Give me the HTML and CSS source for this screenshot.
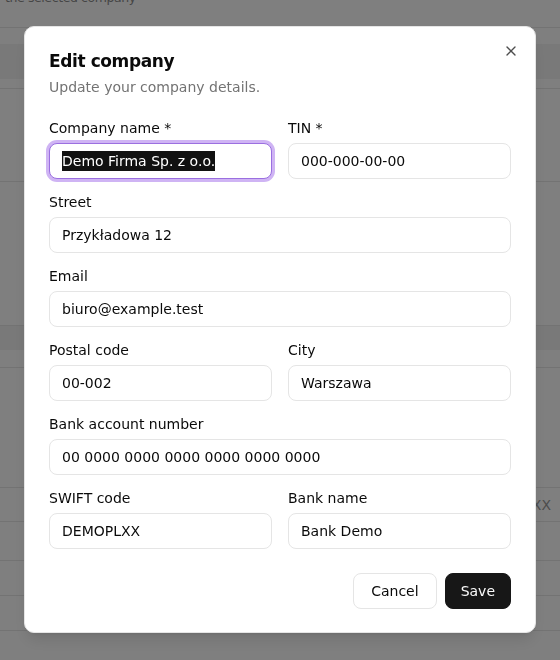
FILE: index.html
```html
<!DOCTYPE html>
<html lang="en">
<head>
<meta charset="utf-8">
<title>Edit company</title>
<link rel="stylesheet" href="styles.css">
</head>
<body>
<main class="page">
  <div class="bg-head"><p class="bg-desc">the selected company</p></div>
  <div class="bg-gap"></div>
  <div class="bg-band"></div>
  <div class="bg-row h10"></div>
  <div class="bg-row h93"></div>
  <div class="bg-row h144"></div>
  <div class="bg-band h24"></div>
  <div class="bg-row h18"></div>
  <div class="bg-row h120"></div>
  <div class="bg-row h34 bg-cell">DEMOPLXX</div>
  <div class="bg-row h39"></div>
  <div class="bg-row h35"></div>
  <div class="bg-row h35"></div>
</main>

<div class="overlay"></div>

<div class="dialog" role="dialog" aria-labelledby="dlg-title">
  <button type="button" class="close" aria-label="Close">
    <svg viewBox="0 0 24 24" width="16" height="16" fill="none" stroke="currentColor" stroke-width="2" stroke-linecap="round" stroke-linejoin="round"><path d="M18 6 6 18"/><path d="m6 6 12 12"/></svg>
  </button>
  <header class="dialog-header">
    <h2 class="dialog-title" id="dlg-title">Edit company</h2>
    <p class="dialog-desc">Update your company details.</p>
  </header>
  <form class="form">
    <div class="row two">
      <div class="field">
        <label class="label">Company name *</label>
        <div class="input focused"><span class="selected">Demo Firma Sp. z o.o.</span></div>
      </div>
      <div class="field">
        <label class="label" for="tin">TIN *</label>
        <input class="input" id="tin" value="000-000-00-00">
      </div>
    </div>
    <div class="field">
      <label class="label" for="street">Street</label>
      <input class="input" id="street" value="Przykładowa 12">
    </div>
    <div class="field">
      <label class="label" for="email">Email</label>
      <input class="input" id="email" value="biuro@example.test">
    </div>
    <div class="row two">
      <div class="field">
        <label class="label" for="postal">Postal code</label>
        <input class="input" id="postal" value="00-002">
      </div>
      <div class="field">
        <label class="label" for="city">City</label>
        <input class="input" id="city" value="Warszawa">
      </div>
    </div>
    <div class="field">
      <label class="label" for="bank">Bank account number</label>
      <input class="input" id="bank" value="00 0000 0000 0000 0000 0000 0000">
    </div>
    <div class="row two">
      <div class="field">
        <label class="label" for="swift">SWIFT code</label>
        <input class="input" id="swift" value="DEMOPLXX">
      </div>
      <div class="field">
        <label class="label" for="bankname">Bank name</label>
        <input class="input" id="bankname" value="Bank Demo">
      </div>
    </div>
    <div class="actions">
      <button type="button" class="btn btn-outline">Cancel</button>
      <button type="submit" class="btn btn-primary">Save</button>
    </div>
  </form>
</div>
</body>
</html>
```

FILE: styles.css
```css
* { box-sizing: border-box; }

html, body {
  margin: 0;
  padding: 0;
  background: #ffffff;
  font-family: "DejaVu Sans", "Liberation Sans", sans-serif;
  color: #0a0a0a;
}

/* background page */
.page {
  width: 560px;
  height: 660px;
  overflow: hidden;
  background: #ffffff;
}
.bg-head {
  display: flow-root;
  height: 28px;
  border-bottom: 1px solid #e6e6e6;
}
.bg-desc {
  margin: -10px 0 0 5px;
  font-size: 12.5px;
  line-height: 16px;
  letter-spacing: -0.4px;
  color: #8a8a8a;
}
.bg-gap { height: 16px; }
.bg-band {
  height: 35px;
  background: #f2f2f2;
}
.bg-band.h24 { height: 24px; }
.bg-row { border-bottom: 1px solid #e6e6e6; }
.h10 { height: 10px; }
.h93 { height: 93px; }
.h144 { height: 144px; }
.h18 { height: 18px; }
.h120 { height: 120px; }
.h34 { height: 34px; }
.h39 { height: 39px; }
.h35 { height: 35px; }
.bg-cell {
  display: flex;
  align-items: center;
  justify-content: flex-end;
  padding-right: 9px;
  font-size: 14px;
  color: #9a9a9a;
}

.overlay {
  position: fixed;
  inset: 0;
  background: rgba(0, 0, 0, 0.5);
}

/* dialog */
.dialog {
  position: fixed;
  left: 24px;
  top: 26px;
  width: 512px;
  background: #ffffff;
  border: 1px solid #e5e5e5;
  border-radius: 10px;
  padding: 24px 24px 23px;
  box-shadow: 0 10px 15px -3px rgba(0,0,0,0.1), 0 4px 6px -4px rgba(0,0,0,0.1);
}
.close {
  position: absolute;
  top: 16px;
  right: 16px;
  width: 16px;
  height: 16px;
  padding: 0;
  border: 0;
  background: transparent;
  color: #0a0a0a;
  opacity: 0.72;
  display: flex;
  align-items: center;
  justify-content: center;
  cursor: pointer;
}
.close svg { display: block; }

.dialog-header {
  display: flex;
  flex-direction: column;
  gap: 6px;
}
.dialog-title {
  margin: 0;
  font-size: 17px;
  line-height: 20px;
  font-weight: 700;
  letter-spacing: -0.4px;
  color: #0a0a0a;
}
.dialog-desc {
  margin: 0;
  font-size: 14px;
  line-height: 20px;
  color: #737373;
}

.form {
  margin-top: 21px;
  display: flex;
  flex-direction: column;
  gap: 13px;
}
.row.two {
  display: grid;
  grid-template-columns: 1fr 1fr;
  column-gap: 16px;
}
.field {
  display: flex;
  flex-direction: column;
  gap: 5px;
  min-width: 0;
}
.label {
  font-size: 14px;
  line-height: 20px;
  color: #0a0a0a;
}
.input {
  display: block;
  width: 100%;
  height: 36px;
  margin: 0;
  padding: 0 12px;
  border: 1px solid #e5e5e5;
  border-radius: 8px;
  background: #ffffff;
  font-family: "DejaVu Sans", "Liberation Sans", sans-serif;
  font-size: 14px;
  color: #0a0a0a;
  outline: none;
}
.input.focused {
  display: flex;
  align-items: center;
  border-color: #9b6fe0;
  box-shadow: 0 0 0 3px #cfb4f4;
}
.selected {
  display: inline-block;
  line-height: 20px;
  background: #111111;
  color: #ffffff;
  white-space: nowrap;
}

.actions {
  margin-top: 11px;
  display: flex;
  justify-content: flex-end;
  gap: 8px;
}
.btn {
  height: 36px;
  padding: 0 16px;
  border-radius: 8px;
  font-family: "DejaVu Sans", "Liberation Sans", sans-serif;
  font-size: 14px;
  line-height: 20px;
  cursor: pointer;
}
.btn-outline {
  padding: 0 17px;
  background: #ffffff;
  border: 1px solid #e5e5e5;
  color: #0a0a0a;
}
.btn-primary {
  padding: 0 15px;
  background: #171717;
  border: 1px solid #171717;
  color: #fafafa;
}
```
